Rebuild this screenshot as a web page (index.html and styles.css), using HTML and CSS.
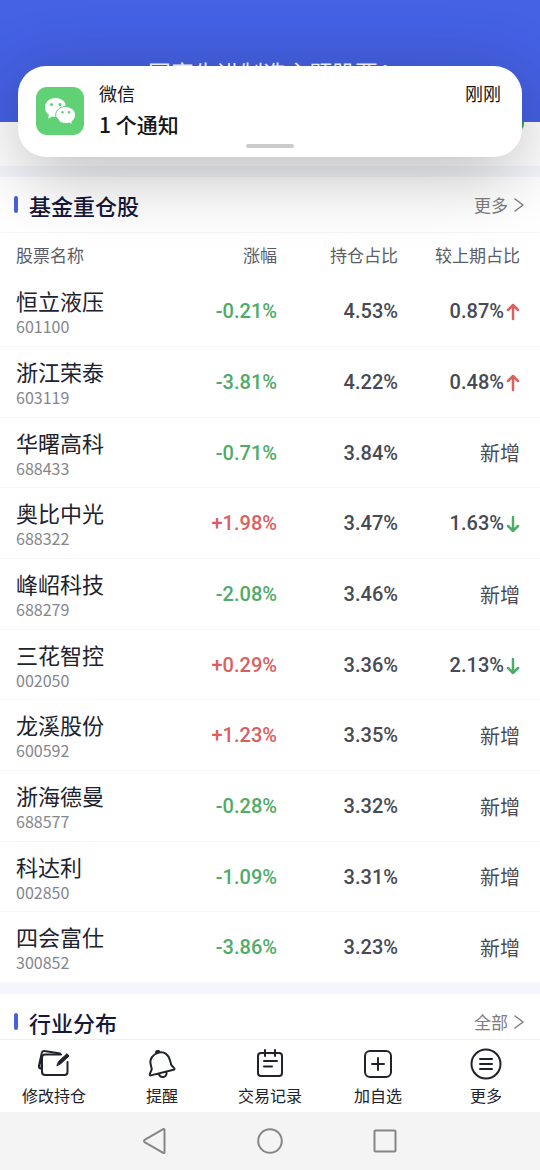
FILE: index.html
```
<!DOCTYPE html>
<html lang="zh-CN">
<head>
<meta charset="utf-8">
<title>基金重仓股</title>
<meta name="viewport" content="width=device-width,initial-scale=1">
<link rel="stylesheet" href="styles.css">
</head>
<body>
<div class="notice" role="status">
  <svg class="notice-icon" viewBox="0 0 48 48" aria-hidden="true">
    <rect width="48" height="48" rx="11" fill="#60d275"/>
    <path fill="#fff" d="M19.500 11C13.500 11 9 15 9 20.400c0 3 1.500 5.700 4 7.400l-1 4 4.200-2.300c1.500.4 2.800.5 4.600.4h9V17C28 13.500 24 11 19.500 11z"/>
    <path fill="#fff" stroke="#60d275" stroke-width="1" d="M29.500 19.500c-5.400 0-9.800 3.700-9.800 8.500s4.400 8.500 9.800 8.500c1.500 0 2.700-.2 3.800-.6l3.200 1.800-.7-3c2.300-1.600 3.700-4 3.700-6.700 0-4.800-4.500-8.500-10-8.500z"/>
    <path fill="#60d275" d="M31 16h-1.500v3.200h4zM19 30.200h2l3 4h-6z"/>
    <g fill="#60d275"><circle cx="15.500" cy="17.500" r="1.500"/><circle cx="24" cy="17.500" r="1.500"/><circle cx="26.500" cy="25.200" r="1.300"/><circle cx="33" cy="25.200" r="1.300"/></g>
  </svg>
  <div class="notice-text">
    <div class="notice-app">微信</div>
    <div class="notice-body">1 个通知</div>
  </div>
  <time class="notice-time">刚刚</time>
  <span class="notice-handle"></span>
</div>

<main>
  <header class="hero"><h1>国家先进制造主题股票A</h1></header>
  <div class="summary"><span class="dot"></span></div>

  <section>
    <div class="section-head">
      <h2>基金重仓股</h2>
      <a href="#stocks">更多<svg viewBox="0 0 10 16"><path d="M1 2l8 6-8 6"/></svg></a>
    </div>
    <table id="stocks">
      <thead>
        <tr><th>股票名称</th><th>涨幅</th><th>持仓占比</th><th>较上期占比</th></tr>
      </thead>
      <tbody></tbody>
    </table>
  </section>

  <section id="industry">
    <div class="section-head">
      <h2>行业分布</h2>
      <a href="#industry">全部<svg viewBox="0 0 10 16"><path d="M1 2l8 6-8 6"/></svg></a>
    </div>
  </section>
</main>

<nav class="tabs">
  <button type="button">
    <svg viewBox="0 0 36 32"><path d="M25 6.500H9a3 3 0 0 0-3 3V24a3 3 0 0 0 3 3h19.500a3 3 0 0 0 3-3V14"/><path d="M24 5.500L8.500 3.100c-1.500-.3-2.400.4-2.700 1.800L3 17.500c-.3 1.500.3 2.700 1.600 3.100l1 .3M5.500 7v13"/><path class="pencil" d="M21 17.500l1.500-4L31 5.700l2 2.400-8 7.400z"/></svg>
    修改持仓
  </button>
  <button type="button">
    <svg viewBox="0 0 36 32"><path d="M14.800 4.600C8.500 6.300 5.500 11 6.600 16l1.200 5.200-2 5c-.3.900.2 1.400 1 1.200l22.800-5.600c.9-.3 1.200-1.100.6-1.700l-2.900-3.100-1.300-4.800c-1.400-5.200-5.600-9-11.200-7.600zM12 5l.4-1.700 2.200-.4 1 1.500M15 26c1 4.400 8.500 4 7.500-2"/></svg>
    提醒
  </button>
  <button type="button">
    <svg viewBox="0 0 36 32"><rect x="6" y="5" width="24" height="23" rx="3"/><path d="M13 2v6M23 2v6M12 13h13M12 18.500h8"/></svg>
    交易记录
  </button>
  <button type="button">
    <svg viewBox="0 0 36 32"><rect x="5" y="3" width="26" height="26" rx="5"/><path d="M12 16h12M18 10v12"/></svg>
    加自选
  </button>
  <button type="button">
    <svg viewBox="0 0 36 32"><circle cx="18" cy="16" r="14.500"/><path d="M12 11h12M12 16h12M12 21h12"/></svg>
    更多
  </button>
</nav>

<div class="system">
  <button type="button" aria-label="返回"><svg viewBox="0 0 28 28"><path d="M23.500 3v22q0 1.500-1.300.8L4 15.300q-2-1.300 0-2.600L22.200 2.200q1.300-.7 1.300.8z"/></svg></button>
  <button type="button" aria-label="主页"><svg viewBox="0 0 28 28"><circle cx="14" cy="14" r="11.800"/></svg></button>
  <button type="button" aria-label="最近任务"><svg viewBox="0 0 28 28"><rect x="3.500" y="3.500" width="21" height="21" rx="1"/></svg></button>
</div>

<script>
const stocks=[
  ['恒立液压','601100','-0.21%','4.53%','0.87%','up'],
  ['浙江荣泰','603119','-3.81%','4.22%','0.48%','up'],
  ['华曙高科','688433','-0.71%','3.84%','新增'],
  ['奥比中光','688322','+1.98%','3.47%','1.63%','down'],
  ['峰岹科技','688279','-2.08%','3.46%','新增'],
  ['三花智控','002050','+0.29%','3.36%','2.13%','down'],
  ['龙溪股份','600592','+1.23%','3.35%','新增'],
  ['浙海德曼','688577','-0.28%','3.32%','新增'],
  ['科达利','002850','-1.09%','3.31%','新增'],
  ['四会富仕','300852','-3.86%','3.23%','新增']
];
const arrows={up:'M7 16V2M2 7l5-5 5 5',down:'M7 2v14M2 11l5 5 5-5'};

document.querySelector('#stocks tbody').innerHTML=stocks.map(([name,code,chg,hold,diff,dir])=>{
  const arrow=dir?`<svg class="arrow ${dir}" viewBox="0 0 14 18"><path d="${arrows[dir]}"/></svg>`:'';
  return `<tr><td><div class="name">${name}</div><div class="code">${code}</div></td>
    <td class="num ${chg[0]==='+'?'up':'down'}">${chg}</td>
    <td class="num">${hold}</td>
    <td class="${dir?'num':'new'}">${diff}${arrow}</td></tr>`;
}).join('');
</script>
</body>
</html>
```
FILE: styles.css
```
:root{--blue:#4561e4;--ink:#20222e;--grey:#85868c;--up:#d9605f;--down:#4fab68}
*{box-sizing:border-box}
body{margin:0;height:100vh;display:flex;flex-direction:column;background:#fff;color:var(--ink);font-family:"Noto Sans CJK SC",sans-serif}
h1,h2{margin:0}
button{border:0;background:none;padding:0;font:inherit;color:inherit}
svg{fill:none;stroke:currentColor;stroke-width:2;stroke-linecap:round;stroke-linejoin:round}
main{flex:1;min-height:0;overflow-y:auto;scrollbar-width:none}

.notice{position:absolute;z-index:1;top:66px;left:18px;right:18px;height:91px;padding:14px 21px 0 18px;display:flex;background:#fff;border-radius:28px;color:#151515;box-shadow:0 16px 72px rgba(0,0,0,.28)}
.notice-icon{width:48px;height:48px;margin:7px 15px 0 0}
.notice-icon>*{stroke-width:1}
.notice-icon rect,.notice-icon g,.notice-icon path:not([stroke]){stroke:none}
.notice-text{flex:1}
.notice-app,.notice-time{font-size:18px;line-height:26px}
.notice-body{font-size:21px;line-height:36px;font-weight:500}
.notice-handle{position:absolute;left:50%;bottom:9px;width:48px;height:4px;margin-left:-24px;border-radius:2px;background:#ccc}

.hero{height:122px;padding-top:56px;background:var(--blue);color:#fff;text-align:center}
.hero h1{font-size:23px;line-height:32px;font-weight:400}
.summary{position:relative;height:44px}
.dot{position:absolute;top:0;right:16px;width:12px;height:10px;border-radius:0 0 8px 0;background:#3f9f5c}

section{border-top:11px solid #f5f6fb}
.section-head{display:flex;justify-content:space-between;align-items:center;height:56px;padding:0 16px 0 14px;border-bottom:1px solid #f7f7f9}
.section-head h2{display:flex;align-items:center;font-size:22px;line-height:32px;font-weight:500;color:#16183a}
.section-head h2::before{content:"";width:4px;height:17px;margin-right:11px;border-radius:2px;background:#4862d8}
.section-head a{display:flex;align-items:center;font-size:17px;color:#7d7d80;text-decoration:none}
.section-head svg{width:10px;height:16px;margin-left:6px;stroke-width:1.5}

table{width:100%;border-collapse:separate;border-spacing:0;table-layout:fixed}
th,td{padding:0;text-align:right}
th{height:43px;font-size:17px;font-weight:400;color:#5b5d66}
th:first-child,td:first-child{width:30%;padding-left:16px;text-align:left}
th:nth-child(3){width:121px}
th:last-child,td:last-child{width:142px;padding-right:20px}
td{height:71px;border-bottom:1px solid #f7f7f9}
tr:nth-child(3n) td{height:70px}
.name{font-size:22px;line-height:30px}
.code{font-size:16px;line-height:22px;color:var(--grey)}
.num{font:500 20px Roboto,sans-serif;color:#484a54}
.num.up,.arrow.up{color:var(--up)}
.num.down,.arrow.down{color:var(--down)}
.new{font-size:20px;color:#484a54}
.arrow{width:14px;height:18px;margin-left:2px;vertical-align:-3px;stroke-width:2.5}

.tabs{display:flex;height:73px;border-top:1px solid #eee;background:#fff}
.tabs button{flex:1;display:flex;flex-direction:column;align-items:center;padding-top:8px;font-size:16px;line-height:30px}
.tabs svg{width:36px;height:32px}
.tabs .pencil{fill:currentColor;stroke-width:1}
.system{display:flex;justify-content:center;gap:87px;height:58px;background:#f4f4f4;color:#858585}
.system svg{display:block;width:28px;height:28px}
```
